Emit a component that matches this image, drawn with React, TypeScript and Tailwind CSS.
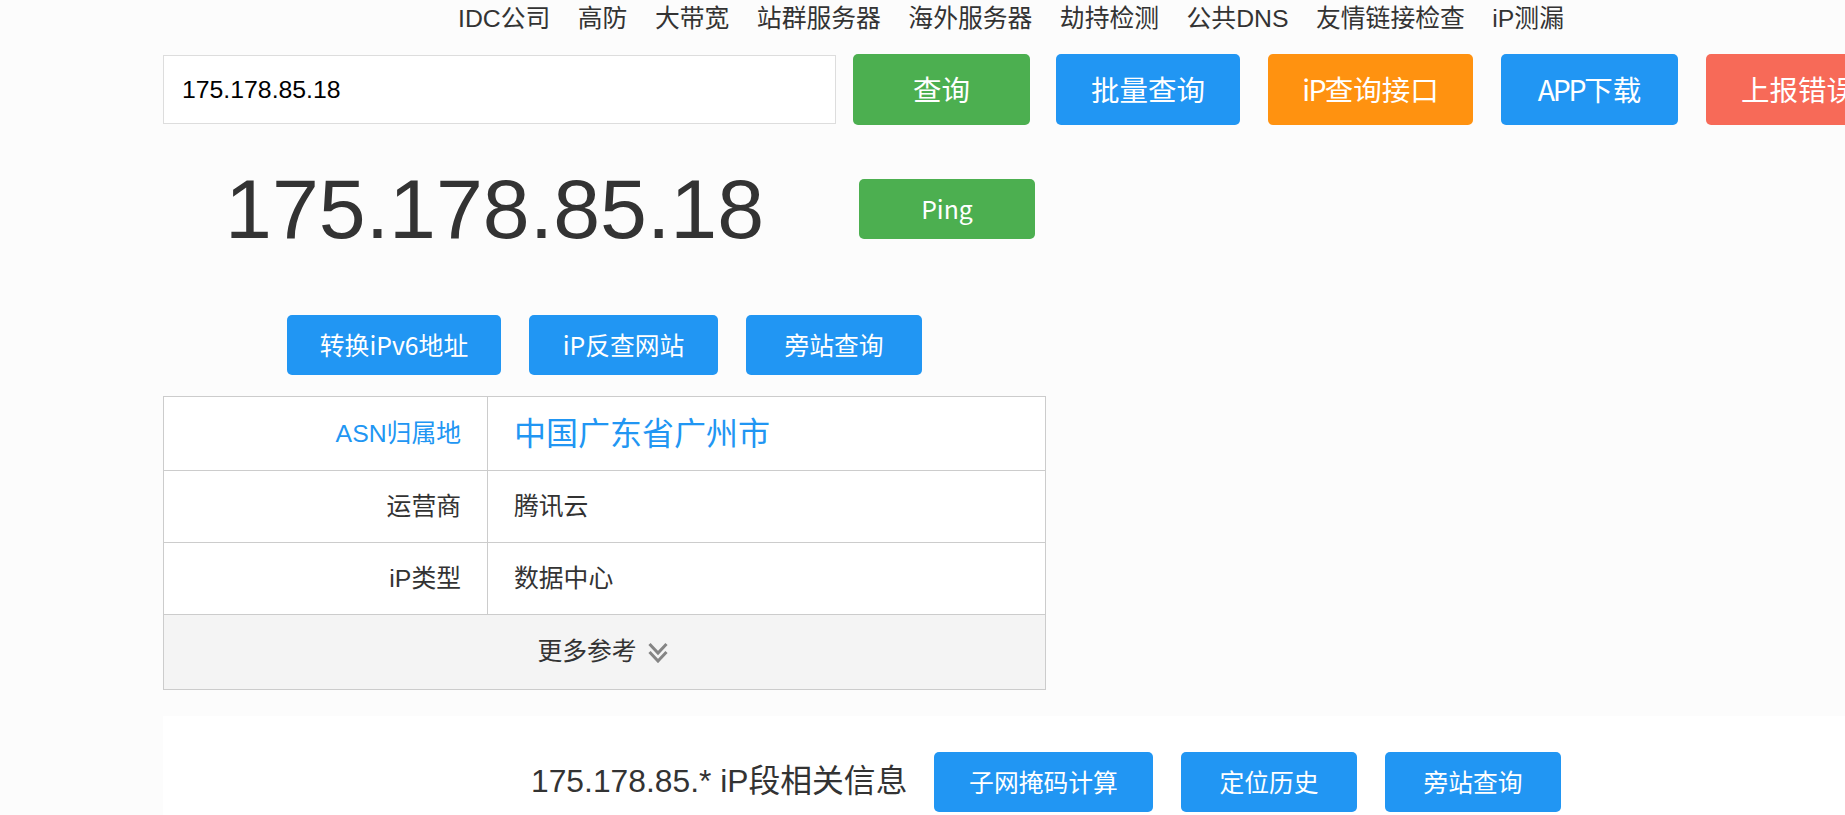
import type { ReactNode } from "react";

const FONT = "font-['Liberation_Sans','Noto_Sans_CJK_SC',sans-serif]";
const BTNFONT = "font-['Noto_Sans_CJK_SC',sans-serif]";

function Btn({ label, color, w, h, size, className = "" }: { label: ReactNode; color: string; w: string; h: string; size: string; className?: string }) {
  return (
    <button className={`${BTNFONT} flex shrink-0 items-center justify-center rounded-[5px] whitespace-nowrap text-white ${color} ${w} ${h} ${size} ${className}`}>
      {label}
    </button>
  );
}

const nav = ["IDC公司", "高防", "大带宽", "站群服务器", "海外服务器", "劫持检测", "公共DNS", "友情链接检查", "iP测漏"];

function Row({ label, value, blue, tall }: { label: string; value: string; blue?: boolean; tall?: boolean }) {
  return (
    <div className={`flex border-b border-[#cccccc] ${tall ? "h-[74px]" : "h-[72px]"}`}>
      <div className={`flex w-[324px] items-center justify-end border-r border-[#cccccc] pr-[26px] text-[24.8px] ${blue ? "text-[#2196f3]" : "pt-px text-[#333333]"}`}>
        {label}
      </div>
      <div className={`flex items-center pl-[26px] ${blue ? "text-[32px] text-[#2196f3]" : "pt-px text-[24.8px] text-[#333333]"}`}>
        {value}
      </div>
    </div>
  );
}

export default function App() {
  return (
    <div className={`${FONT} h-[815px] w-full overflow-hidden bg-[#fcfcfc] text-[#333333]`}>
      <nav className="flex h-[37px] items-center gap-[27.5px] pl-[458px] text-[24.8px] whitespace-nowrap">
        {nav.map((n) => (
          <a key={n}>{n}</a>
        ))}
      </nav>

      <div className="mt-[17px] flex items-start pl-[163px]">
        <input
          readOnly
          value="175.178.85.18"
          className="mt-px h-[69px] w-[673px] shrink-0 border border-[#dddddd] bg-white pl-[18px] text-[24.8px] text-black outline-none"
        />
        <Btn className="ml-[17px]" label="查询" color="bg-[#4caf50]" w="w-[177px]" h="h-[71px]" size="text-[28.5px]" />
        <Btn className="ml-[26px]" label="批量查询" color="bg-[#2196f3]" w="w-[184px]" h="h-[71px]" size="text-[28.5px]" />
        <Btn className="ml-[28px]" label={<><span className="tracking-[-0.06em]">iP</span>查询接口</>} color="bg-[#ff9210]" w="w-[205px]" h="h-[71px]" size="text-[28.5px]" />
        <Btn className="ml-[28px]" label={<><span className="tracking-[-0.08em]">APP</span>下载</>} color="bg-[#2196f3]" w="w-[177px]" h="h-[71px]" size="text-[28.5px]" />
        <Btn className="ml-[28px]" label="上报错误" color="bg-[#f76a58]" w="w-[184px]" h="h-[71px]" size="text-[28.5px]" />
      </div>

      <div className="mt-[54px] flex h-[60px] items-center pl-[225px]">
        <h1 className="w-[634px] shrink-0 text-[84.3px] leading-none">175.178.85.18</h1>
        <Btn label="Ping" color="bg-[#4caf50]" w="w-[176px]" h="h-[60px]" size="text-[24.8px]" />
      </div>

      <div className="mt-[76px] flex gap-[28px] pl-[287px]">
        <Btn label="转换iPv6地址" color="bg-[#2196f3]" w="w-[214px]" h="h-[60px]" size="text-[24.8px]" />
        <Btn label="iP反查网站" color="bg-[#2196f3]" w="w-[189px]" h="h-[60px]" size="text-[24.8px]" />
        <Btn label="旁站查询" color="bg-[#2196f3]" w="w-[176px]" h="h-[60px]" size="text-[24.8px]" />
      </div>

      <div className="mt-[21px] ml-[163px] w-[883px] border-x border-t border-[#cccccc] bg-white">
        <Row label="ASN归属地" value="中国广东省广州市" blue tall />
        <Row label="运营商" value="腾讯云" />
        <Row label="iP类型" value="数据中心" />
        <div className="flex h-[75px] items-center justify-center gap-[11px] border-b border-[#cccccc] bg-[#f4f4f4] pr-[4px] text-[24.8px]">
          <span>更多参考</span>
          <svg width="20" height="21" viewBox="0 0 20 21" fill="none" stroke="#858585" strokeWidth="3">
            <path d="M1.5 2 L10 11 L18.5 2" />
            <path d="M1.5 10 L10 19 L18.5 10" />
          </svg>
        </div>
      </div>

      <section className="mt-[26px] ml-[163px] flex h-[99px] items-start bg-white pt-[36px] pl-[368px]">
        <h2 className="flex h-[60px] w-[403px] shrink-0 items-center text-[31.8px] whitespace-nowrap">175.178.85.* iP段相关信息</h2>
        <Btn className="mr-[28px]" label="子网掩码计算" color="bg-[#2196f3]" w="w-[219px]" h="h-[60px]" size="text-[24.8px]" />
        <Btn className="mr-[28px]" label="定位历史" color="bg-[#2196f3]" w="w-[176px]" h="h-[60px]" size="text-[24.8px]" />
        <Btn label="旁站查询" color="bg-[#2196f3]" w="w-[176px]" h="h-[60px]" size="text-[24.8px]" />
      </section>
    </div>
  );
}
